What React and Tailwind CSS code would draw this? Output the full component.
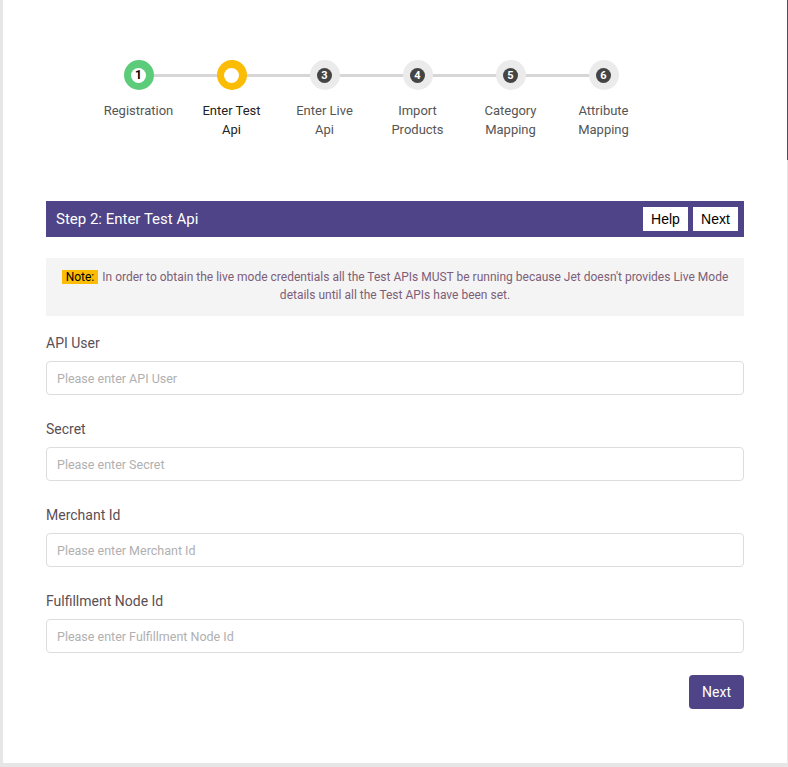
import React from "react";

const steps = [
  { n: 1, label: ["Registration"], state: "done" },
  { n: 2, label: ["Enter Test", "Api"], state: "active" },
  { n: 3, label: ["Enter Live", "Api"], state: "todo" },
  { n: 4, label: ["Import", "Products"], state: "todo" },
  { n: 5, label: ["Category", "Mapping"], state: "todo" },
  { n: 6, label: ["Attribute", "Mapping"], state: "todo" },
];

const fields = [
  { label: "API User", placeholder: "Please enter API User" },
  { label: "Secret", placeholder: "Please enter Secret" },
  { label: "Merchant Id", placeholder: "Please enter Merchant Id" },
  { label: "Fulfillment Node Id", placeholder: "Please enter Fulfillment Node Id" },
];

const StepCircle = ({ step }) => {
  if (step.state === "done") {
    return (
      <div className="w-[30px] h-[30px] rounded-full bg-[#5ccb7a] flex items-center justify-center">
        <div className="w-[15px] h-[15px] rounded-full bg-white flex items-center justify-center text-[12px] font-bold text-black leading-none">
          {step.n}
        </div>
      </div>
    );
  }
  if (step.state === "active") {
    return (
      <div className="w-[30px] h-[30px] rounded-full bg-[#fbbc05] flex items-center justify-center">
        <div className="w-[15px] h-[15px] rounded-full bg-white"></div>
      </div>
    );
  }
  return (
    <div className="w-[30px] h-[30px] rounded-full bg-[#ebebeb] flex items-center justify-center">
      <div className="w-[15px] h-[15px] rounded-full bg-[#444] flex items-center justify-center text-[11px] font-bold text-white leading-none">
        {step.n}
      </div>
    </div>
  );
};

const App = () => {
  return (
    <div
      className="flex w-[788px] h-[767px] bg-white overflow-hidden"
      style={{ fontFamily: "Roboto, 'Liberation Sans', sans-serif" }}
    >
      <div className="flex-1 flex flex-col border-l-[3px] border-b-[4px] border-[#e6e6e6] pl-[43px] pr-[43px]">
        {/* stepper */}
        <div className="flex pt-[60px] pl-[46px]">
          {steps.map((step, i) => (
            <div key={step.n} className="relative w-[93px] flex flex-col items-center">
              {i < steps.length - 1 && (
                <div className="absolute top-[14px] left-[46px] w-[93px] h-[3px] bg-[#d6d6d6]"></div>
              )}
              <div className="relative">
                <StepCircle step={step} />
              </div>
              <div
                className={`mt-[11px] text-[13px] leading-[19px] text-center ${
                  step.state === "active" ? "text-[#222]" : "text-[#555]"
                }`}
              >
                {step.label.map((l) => (
                  <div key={l}>{l}</div>
                ))}
              </div>
            </div>
          ))}
        </div>

        {/* header bar */}
        <div className="mt-[62px] h-[36px] bg-[#4e4487] flex items-center justify-between pl-[10px] pr-[6px]">
          <span className="text-white text-[15px]">Step 2: Enter Test Api</span>
          <div
            className="flex gap-[5px]"
            style={{ fontFamily: "'Liberation Sans', Arial, sans-serif" }}
          >
            <button className="bg-white text-black text-[14px] h-[24px] w-[45px]">Help</button>
            <button className="bg-white text-black text-[14px] h-[24px] w-[45px]">Next</button>
          </div>
        </div>

        {/* note */}
        <div className="mt-[21px] bg-[#f4f4f4] px-[12px] pt-[10px] pb-[12px] text-center text-[12px] leading-[18px] text-[#7d5e78]">
          <span className="bg-[#fbbc05] text-black px-[4px] mr-[4px]">Note:</span>
          In order to obtain the live mode credentials all the Test APIs MUST be running because Jet doesn't provides Live Mode details until all the Test APIs have been set.
        </div>

        {/* fields */}
        <div className="flex flex-col mt-[17px] gap-[24px]">
          {fields.map((f) => (
            <div key={f.label} className="flex flex-col">
              <label className="text-[14px] leading-[20px] text-[#5a4f55]">{f.label}</label>
              <input
                type="text"
                placeholder={f.placeholder}
                className="mt-[8px] h-[34px] border border-[#dddddd] rounded-[4px] px-[10px] text-[12.5px] placeholder-[#b0b0b0] outline-none"
              />
            </div>
          ))}
        </div>

        <div className="flex justify-end mt-[22px]">
          <button className="bg-[#4e4487] text-white text-[14px] rounded-[4px] w-[55px] h-[34px]">
            Next
          </button>
        </div>
      </div>
      <div className="w-[1px] flex flex-col">
        <div className="h-[160px] bg-[#4e4487]"></div>
        <div className="flex-1 bg-[#e6e6e6]"></div>
      </div>
    </div>
  );
};

export default App;
